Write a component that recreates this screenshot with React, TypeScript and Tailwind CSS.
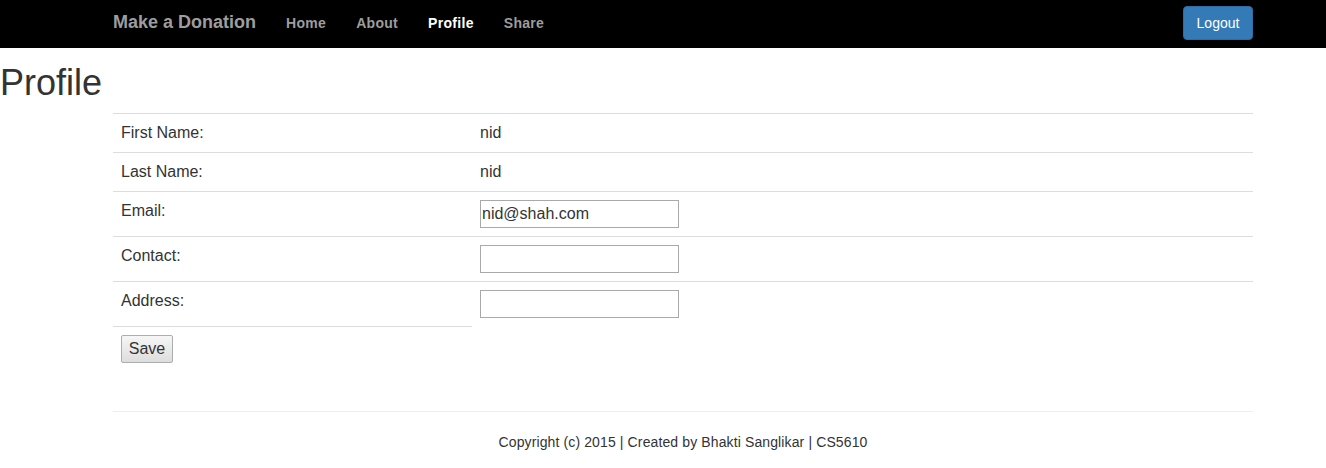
export default function App() {
  const font = { fontFamily: '"Liberation Sans", Arial, sans-serif' };
  return (
    <div className="min-h-[468px] bg-white text-[#333]" style={font}>
      <nav className="h-[48px] bg-black">
        <div className="ml-[113px] flex h-full w-[1140px] items-start">
          <span className="mt-[12px] text-[18px] font-bold leading-[20px] text-[#9d9d9d]">Make a Donation</span>
          <ul className="mt-[13px] ml-[15px] flex text-[14px] font-bold leading-[20px] tracking-[0.3px]">
            <li className="px-[15px] text-[#9d9d9d]">Home</li>
            <li className="px-[15px] text-[#9d9d9d]">About</li>
            <li className="px-[15px] text-white">Profile</li>
            <li className="px-[15px] text-[#9d9d9d]">Share</li>
          </ul>
          <button className="ml-auto mt-[6px] h-[34px] w-[70px] rounded-[4px] border border-[#2e6da4] bg-[#337ab7] text-[14px] leading-[20px] text-white">
            Logout
          </button>
        </div>
      </nav>
      <h1 className="mt-[15px] mb-[10px] text-[36px] font-normal leading-[40px]">Profile</h1>
      <div className="ml-[113px] w-[1140px]">
        <table className="w-full border-collapse text-[16px] leading-[22px]">
          <tbody>
            <tr className="border-t border-[#ddd]">
              <td className="w-[359px] px-2 py-2 align-top">First Name:</td>
              <td className="px-2 py-2 align-top">nid</td>
            </tr>
            <tr className="border-t border-[#ddd]">
              <td className="px-2 py-2 align-top">Last Name:</td>
              <td className="px-2 py-2 align-top">nid</td>
            </tr>
            <tr className="border-t border-[#ddd]">
              <td className="px-2 py-2 align-top">Email:</td>
              <td className="px-2 py-2 align-top">
                <input
                  defaultValue="nid@shah.com"
                  className="block h-[28px] w-[199px] border border-[#a9a9a9] px-[1px] text-[16px] text-[#333] outline-none"
                  style={font}
                />
              </td>
            </tr>
            <tr className="border-t border-[#ddd]">
              <td className="px-2 py-2 align-top">Contact:</td>
              <td className="px-2 py-2 align-top">
                <input className="block h-[28px] w-[199px] border border-[#a9a9a9] px-[1px] text-[16px] outline-none" style={font} />
              </td>
            </tr>
            <tr className="border-t border-[#ddd]">
              <td className="px-2 py-2 align-top">Address:</td>
              <td className="px-2 py-2 align-top">
                <input className="block h-[28px] w-[199px] border border-[#a9a9a9] px-[1px] text-[16px] outline-none" style={font} />
              </td>
            </tr>
            <tr>
              <td className="border-t border-[#ddd] px-2 py-2 align-top">
                <button className="block h-[28px] w-[52px] rounded-[2px] border border-[#adadad] bg-gradient-to-b from-[#f6f6f6] to-[#dddddd] text-[16px] leading-[20px] text-[#333]">
                  Save
                </button>
              </td>
              <td></td>
            </tr>
          </tbody>
        </table>
        <hr className="mt-[40px] border-t border-[#eee]" />
        <p className="pt-[20px] text-center text-[14px] leading-[20px] tracking-[0.12px]">
          Copyright (c) 2015 | Created by Bhakti Sanglikar | CS5610
        </p>
      </div>
    </div>
  );
}
